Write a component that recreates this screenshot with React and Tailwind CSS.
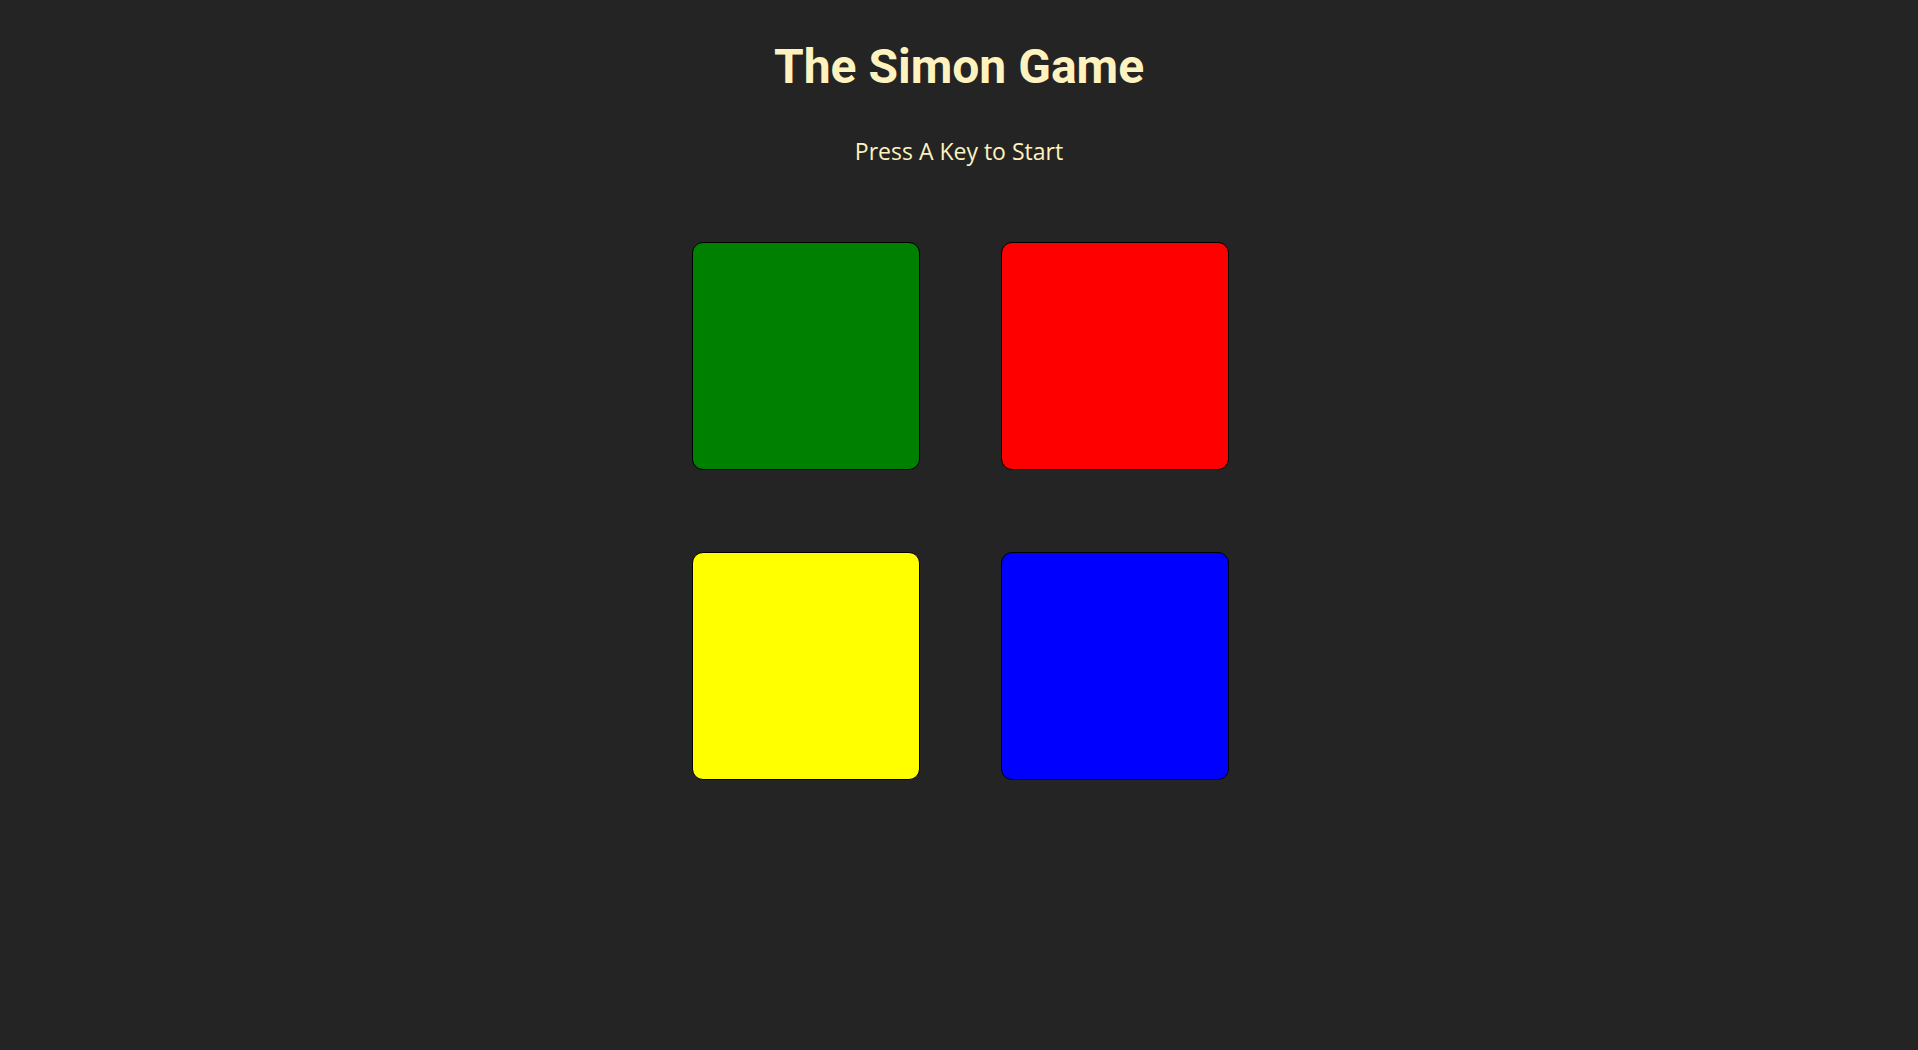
const pads = [
  { id: "green", color: "bg-[#008000]" },
  { id: "red", color: "bg-[#ff0000]" },
  { id: "yellow", color: "bg-[#ffff00]" },
  { id: "blue", color: "bg-[#0000ff]" },
];

const App = () => {
  return (
    <div className="bg-[#242424] min-h-screen flex flex-col items-center">
      <h1 className="mt-[43px] text-[48px] leading-none font-bold text-[#fef2bf] font-['Roboto',sans-serif]">
        The Simon Game
      </h1>
      <p className="mt-[49px] text-[23px] leading-none text-[#fef2bf] font-['Open_Sans',sans-serif]">
        Press A Key to Start
      </p>

      <div className="grid grid-cols-2 gap-x-[81px] gap-y-[82px] mt-[79px] ml-[3px]">
        {pads.map((pad) => (
          <div
            key={pad.id}
            className={`w-[228px] h-[228px] border border-black rounded-[11px] ${pad.color}`}
          />
        ))}
      </div>
    </div>
  );
};

export default App;
